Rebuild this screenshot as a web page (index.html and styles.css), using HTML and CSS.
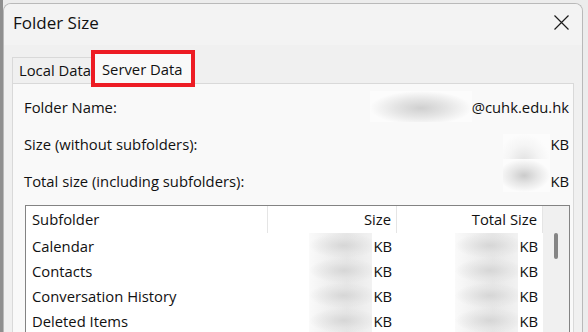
FILE: index.html
```html
<!DOCTYPE html>
<html lang="en">

<head>
    <meta charset="UTF-8">
    <title>Folder Size</title>

    <!-- CSS -->
    <link rel="stylesheet" href="styles.css">

</head>

<body>
    <div class="window">
        <div class="titlebar">
            <span class="title">Folder Size</span>
            <svg class="close" width="15" height="15" viewBox="0 0 15 15">
                <path d="M0.5 0.5 L14.5 14.5 M14.5 0.5 L0.5 14.5" stroke="#1b1b1b" stroke-width="1.2" fill="none"/>
            </svg>
        </div>

        <div class="client">
            <div class="tabs">
                <div class="tab">Local Data</div>
                <div class="tab active">Server Data</div>
            </div>

            <div class="panel">
                <div class="field">
                    <span class="label">Folder Name:</span>
                    <span class="value"><span class="blur blur-name"></span>@cuhk.edu.hk</span>
                </div>
                <div class="field">
                    <span class="label">Size (without subfolders):</span>
                    <span class="value"><span class="blur blur-size"></span>KB</span>
                </div>
                <div class="field">
                    <span class="label">Total size (including subfolders):</span>
                    <span class="value"><span class="blur blur-size dark"></span>KB</span>
                </div>

                <div class="list">
                    <div class="grid">
                        <div class="head">Subfolder</div>
                        <div class="head num">Size</div>
                        <div class="head num">Total Size</div>

                        <div class="cell">Calendar</div>
                        <div class="cell num"><span class="blur blur-col"></span>KB</div>
                        <div class="cell num"><span class="blur blur-col"></span>KB</div>

                        <div class="cell">Contacts</div>
                        <div class="cell num"><span class="blur blur-col"></span>KB</div>
                        <div class="cell num"><span class="blur blur-col"></span>KB</div>

                        <div class="cell">Conversation History</div>
                        <div class="cell num"><span class="blur blur-col"></span>KB</div>
                        <div class="cell num"><span class="blur blur-col"></span>KB</div>

                        <div class="cell">Deleted Items</div>
                        <div class="cell num"><span class="blur blur-col"></span>KB</div>
                        <div class="cell num"><span class="blur blur-col"></span>KB</div>
                    </div>
                    <div class="scrollbar">
                        <div class="thumb"></div>
                    </div>
                </div>
            </div>
        </div>
    </div>
</body>

</html>
```

FILE: styles.css
```css
html, body {
    height: 332px;
    margin: 0;
    overflow: hidden;
}

body {
    font-family: 'Open Sans', 'Noto Sans', sans-serif;
    font-size: 14.8px;
    line-height: 20px;
    color: #111;
    background: linear-gradient(to right, #8f8f8f 0, #8f8f8f 3px, #ececec 3px);
}

.window {
    margin: 3px 5px 0 3px;
    height: 340px;
    border: 1px solid #b9b9b9;
    border-bottom: none;
    border-radius: 8px 8px 0 0;
    background-color: #f0f0f0;
    overflow: hidden;
}

/* title bar */
.titlebar {
    display: flex;
    align-items: center;
    justify-content: space-between;
    height: 37px;
    padding: 0 13px 4px 9px;
    background-color: #f3f3f3;
}

.title {
    font-size: 17px;
    color: #111;
}

.close {
    display: block;
}

/* tabs */
.client {
    padding: 9px 8px 0 8px;
}

.tabs {
    display: flex;
    align-items: flex-end;
    height: 29px;
}

.tab {
    box-sizing: border-box;
    height: 26px;
    width: 83px;
    padding: 2px 0 0 6px;
    border: 1px solid #d9d9d9;
    border-bottom: none;
    background-color: #f0f0f0;
    white-space: nowrap;
    overflow: hidden;
}

.tab.active {
    position: relative;
    height: 29px;
    width: 96px;
    padding: 5px 0 0 7px;
    border: none;
    background-color: #f9f9f9;
    outline: 4px solid #ed1c24;
    z-index: 1;
}

/* panel */
.panel {
    height: 300px;
    padding: 4px 4px 0 11px;
    border: 1px solid #d9d9d9;
    background-color: #f9f9f9;
}

.field {
    display: flex;
    justify-content: space-between;
    align-items: center;
    height: 37px;
}

.value {
    display: flex;
    align-items: center;
}

.blur {
    display: inline-block;
}

/* censored values */
.blur-name {
    width: 102px;
    height: 31px;
    background:
        radial-gradient(ellipse farthest-side at 50% 55%, rgba(205, 205, 205, 0.95) 0%, rgba(218, 218, 218, 0.7) 50%, rgba(252, 252, 252, 0) 100%),
        #fcfcfc;
}

.blur-size {
    width: 47px;
    height: 30px;
    margin-bottom: -10px;
    background:
        radial-gradient(ellipse farthest-side at 45% 90%, rgba(220, 220, 220, 0.8) 0%, rgba(238, 238, 238, 0.5) 60%, rgba(252, 252, 252, 0) 100%),
        #fcfcfc;
}

.blur-size.dark {
    margin-top: -10px;
    margin-bottom: 0;
    height: 33px;
    background:
        radial-gradient(ellipse farthest-side at 45% 50%, rgba(200, 200, 200, 0.95) 0%, rgba(220, 220, 220, 0.7) 50%, rgba(252, 252, 252, 0) 100%),
        #fcfcfc;
}

/* list */
.list {
    display: flex;
    margin: 6px 0 0 1px;
    width: 543px;
    height: 200px;
    border: 1px solid #838383;
    background-color: #ffffff;
}

.grid {
    display: grid;
    grid-template-columns: 242px 129px 146px;
    grid-auto-rows: 25px;
    grid-template-rows: 27px;
}

.head {
    box-sizing: border-box;
    height: 27px;
    padding: 3px 6px 0 6px;
    border-right: 1px solid #e5e5e5;
    margin-bottom: 1px;
}

.cell {
    padding: 3px 6px 0 6px;
    white-space: nowrap;
}

.num {
    text-align: right;
    padding-right: 5px;
}

.cell.num {
    display: flex;
    justify-content: flex-end;
    padding-top: 0;
    align-items: center;
}

.blur-col {
    width: 63px;
    height: 25px;
    margin-right: 1px;
    background:
        radial-gradient(ellipse farthest-side at 55% 50%, rgba(210, 210, 210, 0.8) 0%, rgba(225, 225, 225, 0.55) 60%, rgba(250, 250, 250, 0) 100%),
        linear-gradient(to right, #fafafa, #e6e6e6 60%, #f2f2f2);
}

.scrollbar {
    width: 26px;
    background-color: #f0f0f0;
}

.thumb {
    width: 4px;
    height: 26px;
    margin: 27px 0 0 11px;
    border-radius: 2px;
    background-color: #858585;
}
```
